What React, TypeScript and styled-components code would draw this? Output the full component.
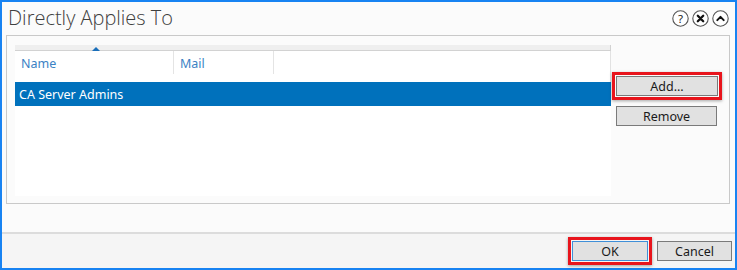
import React from 'react';
import styled, { createGlobalStyle } from 'styled-components';

const Global = createGlobalStyle`
  html, body { margin: 0; padding: 0; background: #ffffff; }
  body { font-family: "Noto Sans", "Open Sans", "Liberation Sans", sans-serif; }
`;

const Window = styled.div`
  box-sizing: border-box;
  width: 737px;
  height: 270px;
  border: 2px solid #1883f2;
  background: #fbfbfb;
  display: flex;
  flex-direction: column;
`;

const TitleBar = styled.div`
  height: 33px;
  display: flex;
  align-items: center;
  justify-content: space-between;
  padding: 0 6px 0 6px;
`;

const Title = styled.h1`
  margin: 0;
  font-family: "Open Sans", "Noto Sans", sans-serif;
  font-weight: 300;
  font-size: 20px;
  color: #404040;
  margin-top: -2px;
`;

const IconRow = styled.div`
  display: flex;
  gap: 3px;
  margin-top: -1px;
`;

const RoundIcon = styled.svg`
  width: 17px;
  height: 17px;
  display: block;
`;

const Panel = styled.div`
  margin: 0 5px 0 4px;
  height: 169px;
  box-sizing: border-box;
  border: 1px solid #c9c9c9;
  background: #fbfbfb;
  display: flex;
  padding: 9px 0 7px 8px;
  gap: 1px;
`;

const Grid = styled.div`
  width: 596px;
  background: #ffffff;
  display: flex;
  flex-direction: column;
`;

const HeaderStrip = styled.div`
  height: 5px;
  background: #efefef;
  border-bottom: 1px solid #d2d2d2;
  border-right: 1px solid #d2d2d2;
  position: relative;
`;

const SortArrow = styled.div`
  position: absolute;
  left: 77px;
  top: 2px;
  width: 0;
  height: 0;
  border-left: 4px solid transparent;
  border-right: 4px solid transparent;
  border-bottom: 4px solid #1a6fba;
`;

const HeaderRow = styled.div`
  height: 31px;
  display: flex;
  border-right: 1px solid #e2e2e2;
`;

const HeaderCell = styled.div<{ $w?: number }>`
  box-sizing: border-box;
  width: ${p => (p.$w ? `${p.$w}px` : 'auto')};
  flex: ${p => (p.$w ? 'none' : '1')};
  padding: 4px 0 0 6px;
  font-size: 12.5px;
  color: #3b82c4;
  border-right: ${p => (p.$w ? '1px solid #e4e4e4' : 'none')};
  height: 23px;
`;

const SelectedRow = styled.div`
  height: 24px;
  background: #0071bc;
  color: #ffffff;
  font-size: 12.5px;
  display: flex;
  align-items: center;
  padding-left: 4px;
`;

const SideColumn = styled.div`
  display: flex;
  flex-direction: column;
  align-items: flex-start;
  padding-top: 27px;
  gap: 6px;
`;

const Highlight = styled.div`
  border: 3px solid #e8141c;
  padding: 1px;
  box-shadow: 0 1px 3px rgba(0, 0, 0, 0.35);
  display: inline-flex;
`;

const Indented = styled.div`
  padding-left: 4px;
`;

const Button = styled.button<{ $w: number; $focus?: boolean }>`
  box-sizing: border-box;
  width: ${p => p.$w}px;
  height: 20px;
  border: 1px solid ${p => (p.$focus ? '#3f8fd8' : '#7a7a7a')};
  background: #e1e1e1;
  font-family: "Noto Sans", "Open Sans", sans-serif;
  font-size: 12.5px;
  color: #1a1a1a;
  padding: 0;
  line-height: 17px;
  display: block;
`;

const Spacer = styled.div`
  flex: 1;
`;

const Footer = styled.div`
  height: 34px;
  border-top: 2px solid #dcdcdc;
  background: #f5f5f5;
  display: flex;
  justify-content: flex-end;
  align-items: center;
  gap: 5px;
  padding: 0 3px 0 0;
`;

const Help = () => (
  <RoundIcon viewBox="0 0 17 17">
    <circle cx="8.5" cy="8.5" r="7.7" fill="#fff" stroke="#555" strokeWidth="1.1" />
    <text x="8.5" y="12.6" textAnchor="middle" fontSize="11.5" fontFamily="Noto Sans, sans-serif" fill="#222">?</text>
  </RoundIcon>
);

const Close = () => (
  <RoundIcon viewBox="0 0 17 17">
    <circle cx="8.5" cy="8.5" r="7.7" fill="#fff" stroke="#555" strokeWidth="1.1" />
    <path d="M5.8 5.8 L11.2 11.2 M11.2 5.8 L5.8 11.2" stroke="#111" strokeWidth="2.3" strokeLinecap="round" />
  </RoundIcon>
);

const Collapse = () => (
  <RoundIcon viewBox="0 0 17 17">
    <circle cx="8.5" cy="8.5" r="7.7" fill="#fff" stroke="#555" strokeWidth="1.1" />
    <path d="M5.3 10.1 L8.5 6.9 L11.7 10.1" fill="none" stroke="#111" strokeWidth="2" strokeLinecap="round" strokeLinejoin="round" />
  </RoundIcon>
);

export default function App() {
  return (
    <>
      <Global />
      <Window>
        <TitleBar>
          <Title>Directly Applies To</Title>
          <IconRow>
            <Help />
            <Close />
            <Collapse />
          </IconRow>
        </TitleBar>
        <Panel>
          <Grid>
            <HeaderStrip>
              <SortArrow />
            </HeaderStrip>
            <HeaderRow>
              <HeaderCell $w={159}>Name</HeaderCell>
              <HeaderCell $w={100}>Mail</HeaderCell>
              <HeaderCell />
            </HeaderRow>
            <SelectedRow>CA Server Admins</SelectedRow>
          </Grid>
          <SideColumn>
            <Highlight>
              <Button $w={102}>Add...</Button>
            </Highlight>
            <Indented>
              <Button $w={101}>Remove</Button>
            </Indented>
          </SideColumn>
        </Panel>
        <Spacer />
        <Footer>
          <Highlight>
            <Button $w={76} $focus>OK</Button>
          </Highlight>
          <Button $w={75}>Cancel</Button>
        </Footer>
      </Window>
    </>
  );
}
